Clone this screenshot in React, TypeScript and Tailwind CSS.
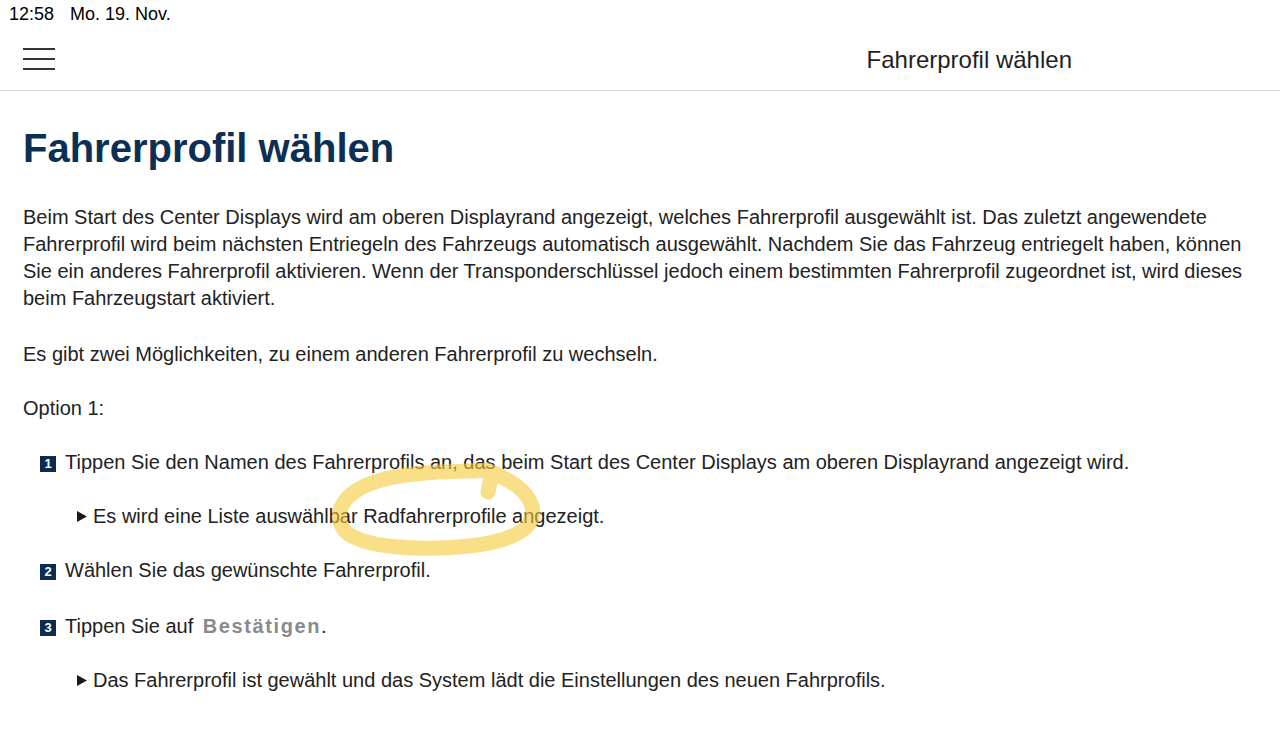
import React from "react";

const Badge = ({ n }: { n: string }) => (
  <span className="inline-flex items-center justify-center w-[16px] h-[16px] bg-[#0d2b4e] text-white text-[13px] font-bold leading-none mr-[9px] shrink-0 translate-y-[1px]">
    {n}
  </span>
);

const Tri = () => (
  <svg width="12" height="13" viewBox="0 0 12 13" className="mr-[5px] shrink-0">
    <path d="M1 1 L11 6.5 L1 12 Z" fill="#1a1a1a" />
  </svg>
);

export default function App() {
  return (
    <div className="relative w-[1280px] h-[730px] bg-white overflow-hidden text-[#222]" style={{ fontFamily: '"Liberation Sans", Arial, sans-serif' }}>
      <div className="h-[28px] flex items-center pl-[9px] text-[18px] text-black">
        <span>12:58</span>
        <span className="ml-[16px]">Mo. 19. Nov.</span>
      </div>
      <div className="h-[63px] flex items-center justify-between border-b border-[#d8d8d8]">
        <div className="ml-[23px] flex flex-col gap-[8px] w-[32px]">
          <div className="h-[2px] bg-[#333]" />
          <div className="h-[2px] bg-[#333]" />
          <div className="h-[2px] bg-[#333]" />
        </div>
        <div className="mr-[208px] mt-[2px] text-[24px] text-[#1f1f1f]">Fahrerprofil wählen</div>
      </div>
      <div className="pl-[23px] pr-[20px] pt-[30px]">
        <h1 className="text-[40px] font-bold text-[#0c2f55] leading-[54px]">Fahrerprofil wählen</h1>
        <div className="mt-[29px] text-[20px] leading-[27px]">
          <p>
            Beim Start des Center Displays wird am oberen Displayrand angezeigt, welches Fahrerprofil ausgewählt ist. Das zuletzt angewendete Fahrerprofil wird beim nächsten Entriegeln des Fahrzeugs automatisch ausgewählt. Nachdem Sie das Fahrzeug entriegelt haben, können Sie ein anderes Fahrerprofil aktivieren. Wenn der Transponderschlüssel jedoch einem bestimmten Fahrerprofil zugeordnet ist, wird dieses beim Fahrzeugstart aktiviert.
          </p>
          <p className="mt-[29px]">Es gibt zwei Möglichkeiten, zu einem anderen Fahrerprofil zu wechseln.</p>
          <p className="mt-[27px]">Option 1:</p>
          <div className="mt-[27px] pl-[17px] flex items-center">
            <Badge n="1" />
            <span>Tippen Sie den Namen des Fahrerprofils an, das beim Start des Center Displays am oberen Displayrand angezeigt wird.</span>
          </div>
          <div className="mt-[27px] pl-[53px] flex items-center">
            <Tri />
            <span>Es wird eine Liste auswählbar Radfahrerprofile angezeigt.</span>
          </div>
          <div className="mt-[27px] pl-[17px] flex items-center">
            <Badge n="2" />
            <span>Wählen Sie das gewünschte Fahrerprofil.</span>
          </div>
          <div className="mt-[29px] pl-[17px] flex items-center">
            <Badge n="3" />
            <span>Tippen Sie auf <span className="font-bold text-[#8a8a8a] tracking-[1.6px] ml-[4px]">Bestätigen</span>.</span>
          </div>
          <div className="mt-[27px] pl-[53px] flex items-center">
            <Tri />
            <span>Das Fahrerprofil ist gewählt und das System lädt die Einstellungen des neuen Fahrprofils.</span>
          </div>
        </div>
      </div>
      <svg className="absolute left-0 top-0 pointer-events-none" width="1280" height="730" viewBox="0 0 1280 730">
        <path
          d="M488 470 C 470 472, 420 470, 385 479 C 345 489, 330 512, 345 531 C 362 548, 420 551, 470 546 C 515 541, 537 527, 532 506 C 527 489, 507 479, 492 472 L 488 492"
          fill="none"
          stroke="#f6c93a"
          strokeOpacity="0.6"
          strokeWidth="15"
          strokeLinecap="round"
          strokeLinejoin="round"
        />
      </svg>
    </div>
  );
}
